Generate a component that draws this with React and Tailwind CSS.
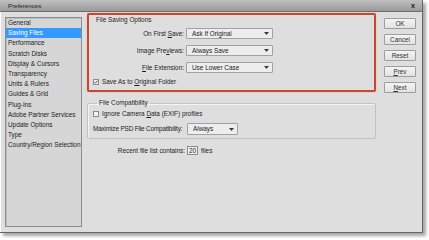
import React from 'react';

const categories = [
  'General',
  'Saving Files',
  'Performance',
  'Scratch Disks',
  'Display & Cursors',
  'Transparency',
  'Units & Rulers',
  'Guides & Grid',
  'Plug-Ins',
  'Adobe Partner Services',
  'Update Options',
  'Type',
  'Country/Region Selection',
];

const U = ({ children }) => <span className="underline underline-offset-[1px]">{children}</span>;

const Arrow = () => (
  <svg width="5" height="3" viewBox="0 0 5 3">
    <path d="M0 0H5L2.5 3Z" fill="#3c3c3c" />
  </svg>
);

const Select = ({ value, className }) => (
  <div
    className={`flex items-center justify-between border border-[#a2a2a2] bg-[#ededed] rounded-[1px] pl-[5px] pr-[3px] shrink-0 ${className}`}
  >
    <span>{value}</span>
    <Arrow />
  </div>
);

const Checkbox = ({ checked }) => (
  <div className="w-[6px] h-[6px] border border-[#8a8a8a] bg-[#f2f2f2] flex items-center justify-center shrink-0">
    {checked && (
      <svg width="6" height="6" viewBox="0 0 6 6">
        <path d="M0.8 3L2.4 4.6L5.4 0.8" stroke="#404040" strokeWidth="1.3" fill="none" />
      </svg>
    )}
  </div>
);

const Button = ({ children }) => (
  <div className="w-[32px] h-[11px] border border-[#9e9e9e] rounded-[1px] bg-gradient-to-b from-[#f4f4f4] to-[#e2e2e2] flex items-center justify-center text-[#333]">
    {children}
  </div>
);

export default function App() {
  return (
    <div className="w-[429px] h-[240px] bg-white font-['Liberation_Sans',Arial,sans-serif] text-[6.4px] leading-[8px] text-[#1c1c1c] whitespace-nowrap">
      <div className="w-[423px] h-[233px] bg-[#dedede] border-r border-b border-[#666] shadow-[3px_3px_3px_rgba(0,0,0,0.35)] flex flex-col">
        {/* title bar */}
        <div className="h-[12px] shrink-0 bg-gradient-to-b from-[#c0c0c0] to-[#9a9a9a] border-b border-[#6e6e6e] flex items-center justify-between pl-[8px] pr-[7px]">
          <span className="text-[6.2px] text-[#1e1e1e]">Preferences</span>
          <span className="text-[7px] font-bold text-[#222]">x</span>
        </div>

        <div className="flex flex-1 items-start border-l border-white">
          {/* category list */}
          <div className="mt-[5px] ml-[4px] w-[77px] h-[210px] border border-[#8c8c8c] bg-[#d6d6d6] shadow-[inset_1px_1px_0_#bdbdbd]">
            {categories.map((c) => (
              <div
                key={c}
                className={`h-[10.2px] flex items-center pl-[2px] ${c === 'Saving Files' ? 'bg-[#3399ff] text-white' : ''}`}
              >
                {c}
              </div>
            ))}
          </div>

          {/* main column */}
          <div className="ml-[5px] mt-[1px] w-[289px] flex flex-col">
            <div className="h-[79px] border-2 border-[#c9482c] rounded-[2px] shadow-[0_0_1px_rgba(120,40,20,0.5)] flex flex-col pt-[1px]">
              <div className="ml-[7px]">File Saving Options</div>
              <div className="flex items-center mt-[4px]">
                <div className="w-[95px] text-right">
                  On First <U>S</U>ave:
                </div>
                <Select value="Ask If Original" className="ml-[2px] w-[87px] h-[11px]" />
              </div>
              <div className="flex items-center mt-[6px]">
                <div className="w-[95px] text-right">
                  Image Pre<U>v</U>iews:
                </div>
                <Select value="Always Save" className="ml-[2px] w-[87px] h-[11px]" />
              </div>
              <div className="flex items-center mt-[6px]">
                <div className="w-[95px] text-right">
                  <U>F</U>ile Extension:
                </div>
                <Select value="Use Lower Case" className="ml-[2px] w-[87px] h-[11px]" />
              </div>
              <div className="flex items-center mt-[5px] pl-[4px] gap-[3px]">
                <Checkbox checked />
                <span>
                  Save As to <U>O</U>riginal Folder
                </span>
              </div>
            </div>

            <fieldset className="mt-[7px] border border-[#c2c2c2] rounded-[2px] shadow-[inset_1px_1px_0_#f4f4f4] pl-[5px] pb-[3px]">
              <legend className="ml-[4px] px-[2px]">File Compatibility</legend>
              <div className="flex items-center gap-[3px] mt-[3px]">
                <Checkbox />
                <span>
                  Ignore Camera <U>D</U>ata (EXIF) profiles
                </span>
              </div>
              <div className="flex items-center mt-[5px]">
                <div className="w-[94px] tracking-[-0.15px]">Maximize PSD File Compatibility:</div>
                <Select value="Always" className="w-[51px] h-[12px]" />
              </div>
            </fieldset>

            <div className="flex items-center mt-[7px]">
              <div className="w-[98px] text-right">Recent file list contains:</div>
              <div className="ml-[2px] w-[11px] h-[9px] border border-[#8a8a8a] bg-[#f0f0f0] flex items-center justify-center">
                20
              </div>
              <span className="ml-[3px]">files</span>
            </div>
          </div>

          {/* buttons */}
          <div className="ml-[8px] mt-[6px] flex flex-col gap-[5px]">
            <Button>OK</Button>
            <Button>Cancel</Button>
            <Button>Reset</Button>
            <Button>
              <U>P</U>rev
            </Button>
            <Button>
              <U>N</U>ext
            </Button>
          </div>
        </div>
      </div>
    </div>
  );
}
